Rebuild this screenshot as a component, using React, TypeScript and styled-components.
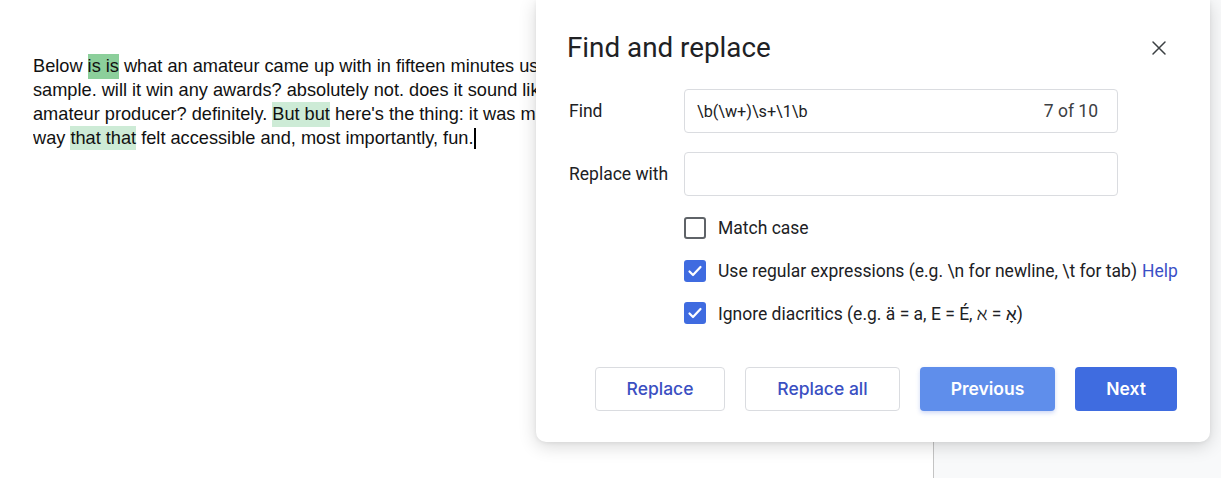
import React from "react";
import styled, { createGlobalStyle } from "styled-components";

const Global = createGlobalStyle`
  html, body { margin: 0; padding: 0; background: #ffffff; }
  body { width: 1221px; height: 478px; overflow: hidden; }
  * { box-sizing: border-box; }
`;

const Page = styled.div`
  position: relative;
  display: flex;
  width: 1221px;
  height: 478px;
  overflow: hidden;
`;

const DocArea = styled.div`
  width: 934px;
  height: 100%;
  background: #ffffff;
  border-right: 1px solid #c4c4c4;
  padding: 54px 0 0 33px;
`;

const SidePanel = styled.div`
  flex: 1;
  height: 100%;
  background: #f8f9fa;
`;

const Paragraph = styled.div`
  width: 503px;
  overflow: hidden;
  font-family: "Liberation Sans", Arial, sans-serif;
  font-size: 18.2px;
  line-height: 24px;
  color: #111111;
`;

const Line = styled.div`
  white-space: nowrap;
  height: 24px;
`;

const Mark = styled.span<{ $active?: boolean }>`
  background: ${(p) => (p.$active ? "#8ccf9b" : "#cdebd6")};
  padding: 2px 0 3px;
`;

const Caret = styled.span`
  display: inline-block;
  width: 2px;
  height: 21px;
  background: #000;
  vertical-align: -5px;
  margin-left: 1px;
`;

const Dialog = styled.div`
  position: absolute;
  left: 536px;
  top: 0;
  width: 674px;
  height: 442px;
  background: #ffffff;
  border-radius: 0 0 10px 10px;
  box-shadow: 0 4px 18px rgba(0, 0, 0, 0.16), 0 1px 4px rgba(0, 0, 0, 0.06);
  padding: 31px 33px 32px 31px;
  display: flex;
  flex-direction: column;
  font-family: Roboto, "Noto Sans", sans-serif;
  color: #202124;
`;

const Header = styled.div`
  display: flex;
  align-items: center;
  justify-content: space-between;
  height: 34px;
`;

const Title = styled.h1`
  margin: 0;
  font-size: 27.8px;
  font-weight: 400;
  line-height: 34px;
  color: #202124;
`;

const CloseButton = styled.button`
  border: none;
  background: transparent;
  width: 24px;
  height: 24px;
  padding: 0;
  margin-right: 6px;
  display: flex;
  align-items: center;
  justify-content: center;
  cursor: pointer;
`;

const Form = styled.div`
  display: grid;
  grid-template-columns: 115px 434px;
  row-gap: 19px;
  margin-top: 24px;
  padding-left: 2px;
  align-items: center;
`;

const Label = styled.label`
  font-size: 17.5px;
  color: #202124;
`;

const Field = styled.div`
  height: 44px;
  border: 1px solid #dadce0;
  border-radius: 4px;
  display: flex;
  align-items: center;
  justify-content: space-between;
  padding: 0 19px 0 12px;
`;

const FieldText = styled.span`
  color: #202124;
  font-size: 16.2px;
`;

const Count = styled.span`
  color: #3c4043;
  font-size: 17.5px;
`;

const Options = styled.div`
  display: flex;
  flex-direction: column;
  margin-top: 11px;
  padding-left: 117px;
`;

const Option = styled.div`
  display: flex;
  align-items: center;
  height: 42.5px;
  gap: 12px;
  font-size: 17.5px;
  color: #202124;
  white-space: nowrap;
`;

const Box = styled.span<{ $checked?: boolean }>`
  width: 22px;
  height: 22px;
  border-radius: 3px;
  flex-shrink: 0;
  display: flex;
  align-items: center;
  justify-content: center;
  background: ${(p) => (p.$checked ? "#3f6be0" : "#ffffff")};
  border: ${(p) => (p.$checked ? "none" : "2px solid #5f6368")};
`;

const Help = styled.a`
  color: #3a50c6;
  text-decoration: none;
  margin-left: 5px;
`;

const Buttons = styled.div`
  display: flex;
  justify-content: flex-end;
  gap: 20px;
  margin-top: 32px;
`;

const Button = styled.button<{ $variant: "outline" | "soft" | "primary"; $w: number }>`
  width: ${(p) => p.$w}px;
  height: 44px;
  border-radius: 4px;
  font-family: Inter, Roboto, sans-serif;
  font-size: 17.5px;
  cursor: pointer;
  ${(p) =>
    p.$variant === "outline"
      ? `background:#ffffff;border:1px solid #dadce0;color:#3a4fc2;font-weight:500;`
      : p.$variant === "soft"
      ? `background:#5f8eeb;border:none;color:#ffffff;font-weight:600;box-shadow:0 2px 4px rgba(60,100,220,0.25);`
      : `background:#3f6ce0;border:none;color:#ffffff;font-weight:600;`}
`;

const Check = () => (
  <svg width="16" height="16" viewBox="0 0 16 16">
    <path d="M2.5 8.5 L6 12 L13.5 4" fill="none" stroke="#fff" strokeWidth="2.2" strokeLinecap="round" strokeLinejoin="round" />
  </svg>
);

export default function App() {
  return (
    <>
      <Global />
      <Page>
        <DocArea>
          <Paragraph>
            <Line>
              Below <Mark $active>is is</Mark> what an amateur came up with in fifteen minutes using
            </Line>
            <Line>sample. will it win any awards? absolutely not. does it sound like</Line>
            <Line>
              amateur producer? definitely. <Mark>But but</Mark> here's the thing: it was made
            </Line>
            <Line>
              way <Mark>that that</Mark> felt accessible and, most importantly, fun.
              <Caret />
            </Line>
          </Paragraph>
        </DocArea>
        <SidePanel />
        <Dialog>
          <Header>
            <Title>Find and replace</Title>
            <CloseButton aria-label="Close">
              <svg width="16" height="16" viewBox="0 0 16 16">
                <path d="M2 2 L14 14 M14 2 L2 14" stroke="#3c4043" strokeWidth="1.5" strokeLinecap="round" />
              </svg>
            </CloseButton>
          </Header>
          <Form>
            <Label>Find</Label>
            <Field>
              <FieldText>\b(\w+)\s+\1\b</FieldText>
              <Count>7 of 10</Count>
            </Field>
            <Label>Replace with</Label>
            <Field />
          </Form>
          <Options>
            <Option>
              <Box />
              Match case
            </Option>
            <Option>
              <Box $checked>
                <Check />
              </Box>
              <span>
                Use regular expressions (e.g. \n for newline, \t for tab)
                <Help href="#">Help</Help>
              </span>
            </Option>
            <Option>
              <Box $checked>
                <Check />
              </Box>
              Ignore diacritics (e.g. ä = a, E = É, ℵ = אָ)
            </Option>
          </Options>
          <Buttons>
            <Button $variant="outline" $w={130}>Replace</Button>
            <Button $variant="outline" $w={155}>Replace all</Button>
            <Button $variant="soft" $w={135}>Previous</Button>
            <Button $variant="primary" $w={102}>Next</Button>
          </Buttons>
        </Dialog>
      </Page>
    </>
  );
}
